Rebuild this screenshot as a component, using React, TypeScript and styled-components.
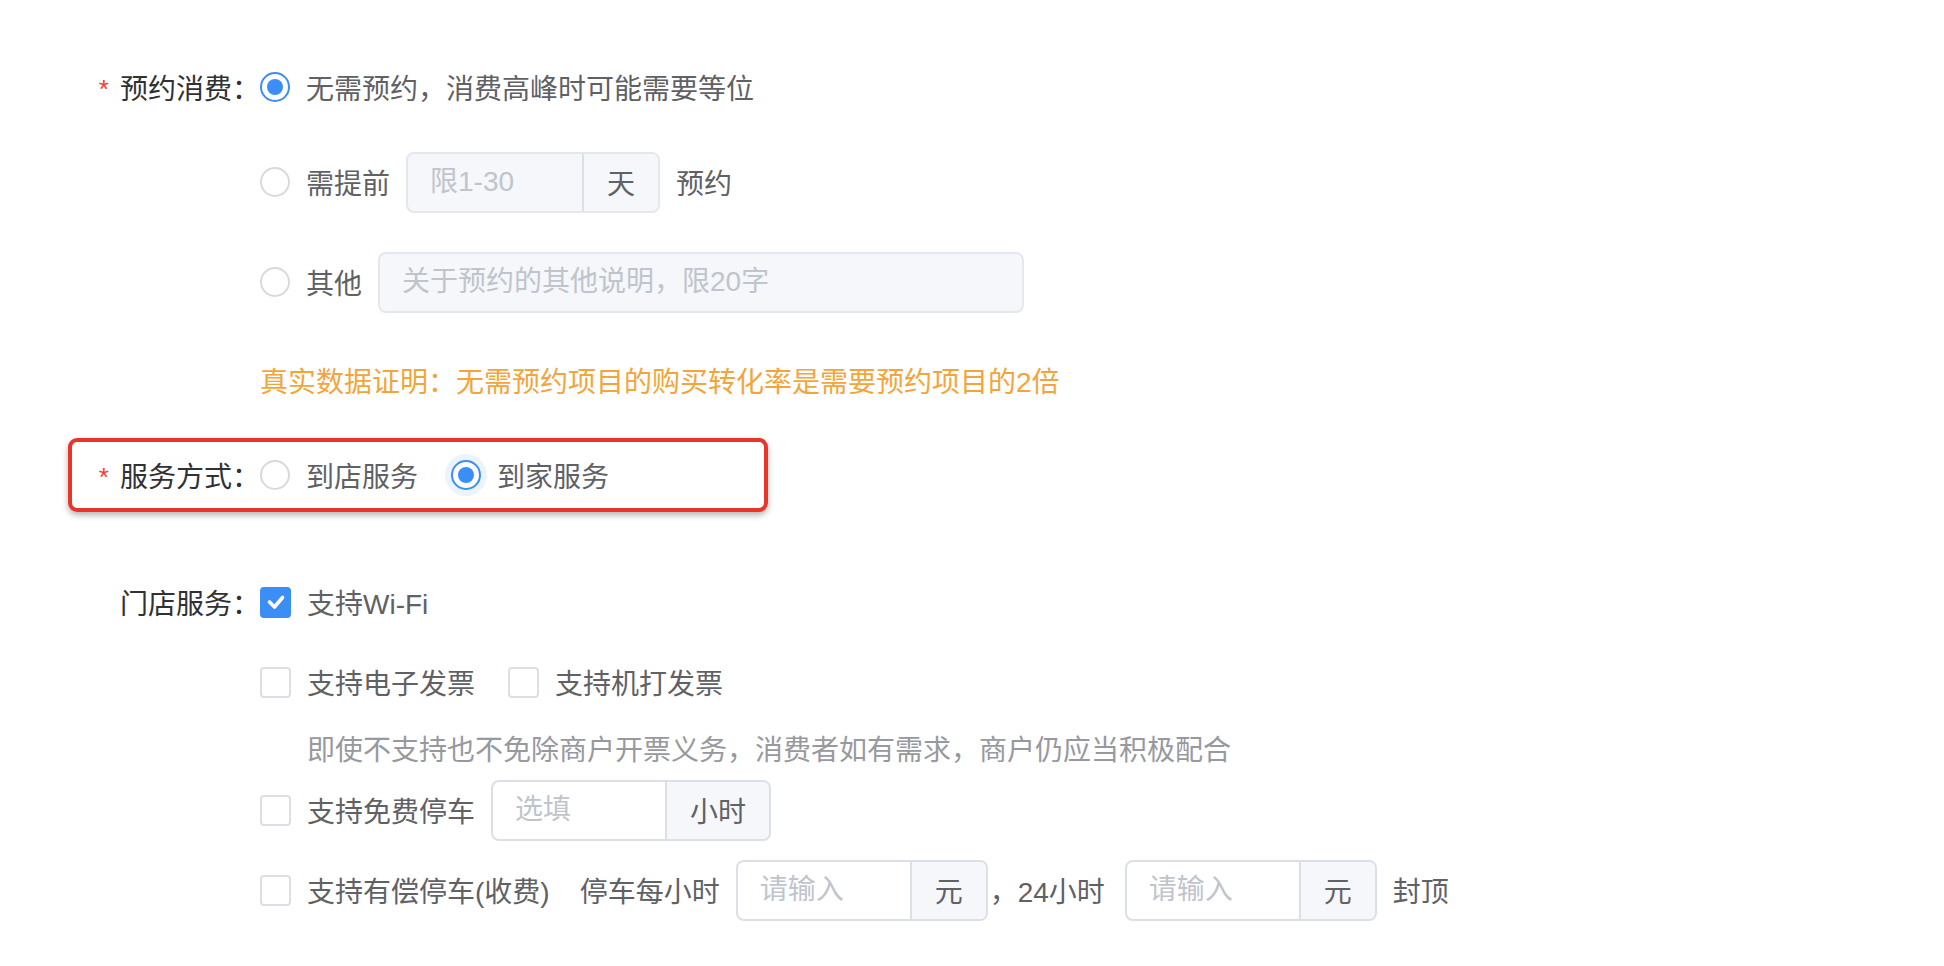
import React from "react";
import styled, { createGlobalStyle, css } from "styled-components";

const GlobalStyle = createGlobalStyle`
  html, body { margin: 0; padding: 0; background: #ffffff; }
  body {
    font-family: "Liberation Sans", "Noto Sans CJK SC", "Noto Sans", sans-serif;
    -webkit-font-smoothing: antialiased;
  }
`;

const BLUE = "#3a8ef6";

const Form = styled.div`
  padding: 56px 0 40px 72px;
  font-size: 28px;
  color: #5f6165;
`;

const Section = styled.div<{ $mt?: number }>`
  display: flex;
  align-items: flex-start;
  margin-top: ${(p) => p.$mt ?? 0}px;
`;

const Label = styled.div`
  width: 188px;
  height: 62px;
  flex-shrink: 0;
  display: flex;
  align-items: center;
  justify-content: flex-end;
  color: #303133;
  white-space: nowrap;
`;

const Required = styled.span`
  color: #f04134;
  font-family: "Liberation Sans", sans-serif;
  font-size: 26px;
  margin-right: 11px;
  position: relative;
  top: 2px;
`;

const Content = styled.div`
  display: flex;
  flex-direction: column;
`;

const Line = styled.div<{ $mt?: number; $h?: number }>`
  display: flex;
  align-items: center;
  gap: 16px;
  height: ${(p) => p.$h ?? 62}px;
  margin-top: ${(p) => p.$mt ?? 0}px;
  white-space: nowrap;
`;

const Group = styled.div`
  display: flex;
  align-items: center;
  gap: 33px;
`;

const Option = styled.label`
  display: flex;
  align-items: center;
  gap: 16px;
  cursor: pointer;
`;

const RadioCircle = styled.span<{ $checked?: boolean; $focus?: boolean }>`
  width: 30px;
  height: 30px;
  box-sizing: border-box;
  border-radius: 50%;
  flex-shrink: 0;
  background: #fff;
  border: 2px solid ${(p) => (p.$checked ? BLUE : "#d9d9d9")};
  display: flex;
  align-items: center;
  justify-content: center;
  ${(p) =>
    p.$focus &&
    css`
      box-shadow: 0 0 0 6px #eaf3fe;
    `}
  &::after {
    content: "";
    width: 16px;
    height: 16px;
    border-radius: 50%;
    background: ${BLUE};
    display: ${(p) => (p.$checked ? "block" : "none")};
  }
`;

const CheckBox = styled.span<{ $checked?: boolean }>`
  width: 31px;
  height: 31px;
  box-sizing: border-box;
  border-radius: 4px;
  flex-shrink: 0;
  display: flex;
  align-items: center;
  justify-content: center;
  background: ${(p) => (p.$checked ? BLUE : "#fff")};
  border: 2px solid ${(p) => (p.$checked ? BLUE : "#dcdfe6")};
`;

const InputGroup = styled.div<{ $disabled?: boolean; $w: number }>`
  display: flex;
  width: ${(p) => p.$w}px;
  height: 61px;
  box-sizing: border-box;
  border: 2px solid ${(p) => (p.$disabled ? "#e4e7ed" : "#dcdfe6")};
  border-radius: 8px;
  overflow: hidden;
  background: ${(p) => (p.$disabled ? "#f5f7fa" : "#ffffff")};
  flex-shrink: 0;
`;

const InputField = styled.input`
  flex: 1;
  min-width: 0;
  border: 0;
  outline: 0;
  background: transparent;
  padding: 0 22px;
  font: inherit;
  color: #606266;
  &::placeholder {
    color: #c0c4cc;
  }
`;

const Addon = styled.div`
  display: flex;
  align-items: center;
  padding: 0 23px;
  background: #f5f7fa;
  border-left: 2px solid #dcdfe6;
  color: #606266;
`;

const Tip = styled.div`
  color: #f3a53b;
`;

const Hint = styled.div`
  color: #97999e;
  padding-left: 47px;
`;

const Comma = styled.span`
  margin: 0 4px 0 -14px;
`;

const Spaced = styled.span`
  margin-left: 14px;
`;

const Highlight = styled.div`
  margin-top: 27px;
  margin-left: -4px;
  width: 700px;
  box-sizing: border-box;
  border: 4px solid #e8352a;
  border-radius: 9px;
  padding: 2px 0 2px 0;
  box-shadow: 0 3px 6px rgba(0, 0, 0, 0.3);
`;

const Check = () => (
  <svg width="20" height="20" viewBox="0 0 20 20" fill="none">
    <polyline
      points="3.5,10 8.5,15 16.5,5.5"
      stroke="#fff"
      strokeWidth="3.6"
      strokeLinecap="round"
      strokeLinejoin="round"
    />
  </svg>
);

const Radio = ({
  checked,
  focus,
  children,
}: {
  checked?: boolean;
  focus?: boolean;
  children: React.ReactNode;
}) => (
  <Option>
    <RadioCircle $checked={checked} $focus={focus} />
    <span>{children}</span>
  </Option>
);

const Checkbox = ({
  checked,
  children,
}: {
  checked?: boolean;
  children: React.ReactNode;
}) => (
  <Option>
    <CheckBox $checked={checked}>{checked && <Check />}</CheckBox>
    <span>{children}</span>
  </Option>
);

const AddonInput = ({
  w,
  placeholder,
  addon,
  disabled,
}: {
  w: number;
  placeholder: string;
  addon?: string;
  disabled?: boolean;
}) => (
  <InputGroup $w={w} $disabled={disabled}>
    <InputField placeholder={placeholder} disabled={disabled} />
    {addon && <Addon>{addon}</Addon>}
  </InputGroup>
);

export default function App() {
  return (
    <>
      <GlobalStyle />
      <Form>
        <Section>
          <Label>
            <Required>*</Required>预约消费：
          </Label>
          <Content>
            <Line>
              <Radio checked>无需预约，消费高峰时可能需要等位</Radio>
            </Line>
            <Line $mt={33}>
              <Radio>需提前</Radio>
              <AddonInput w={254} placeholder="限1-30" addon="天" disabled />
              <span>预约</span>
            </Line>
            <Line $mt={38}>
              <Radio>其他</Radio>
              <AddonInput w={646} placeholder="关于预约的其他说明，限20字" disabled />
            </Line>
            <Line $mt={36}>
              <Tip>真实数据证明：无需预约项目的购买转化率是需要预约项目的2倍</Tip>
            </Line>
          </Content>
        </Section>

        <Highlight>
          <Section>
            <Label>
              <Required>*</Required>服务方式：
            </Label>
            <Content>
              <Line>
                <Group>
                  <Radio>到店服务</Radio>
                  <Radio checked focus>
                    到家服务
                  </Radio>
                </Group>
              </Line>
            </Content>
          </Section>
        </Highlight>

        <Section $mt={59}>
          <Label>门店服务：</Label>
          <Content>
            <Line>
              <Checkbox checked>支持Wi-Fi</Checkbox>
            </Line>
            <Line $mt={18}>
              <Group>
                <Checkbox>支持电子发票</Checkbox>
                <Checkbox>支持机打发票</Checkbox>
              </Group>
            </Line>
            <Line $mt={15} $h={40}>
              <Hint>即使不支持也不免除商户开票义务，消费者如有需求，商户仍应当积极配合</Hint>
            </Line>
            <Line $mt={11}>
              <Checkbox>支持免费停车</Checkbox>
              <AddonInput w={280} placeholder="选填" addon="小时" />
            </Line>
            <Line $mt={18}>
              <Checkbox>支持有偿停车(收费)</Checkbox>
              <Spaced>停车每小时</Spaced>
              <AddonInput w={252} placeholder="请输入" addon="元" />
              <Comma>，24小时</Comma>
              <AddonInput w={252} placeholder="请输入" addon="元" />
              <span>封顶</span>
            </Line>
          </Content>
        </Section>
      </Form>
    </>
  );
}
